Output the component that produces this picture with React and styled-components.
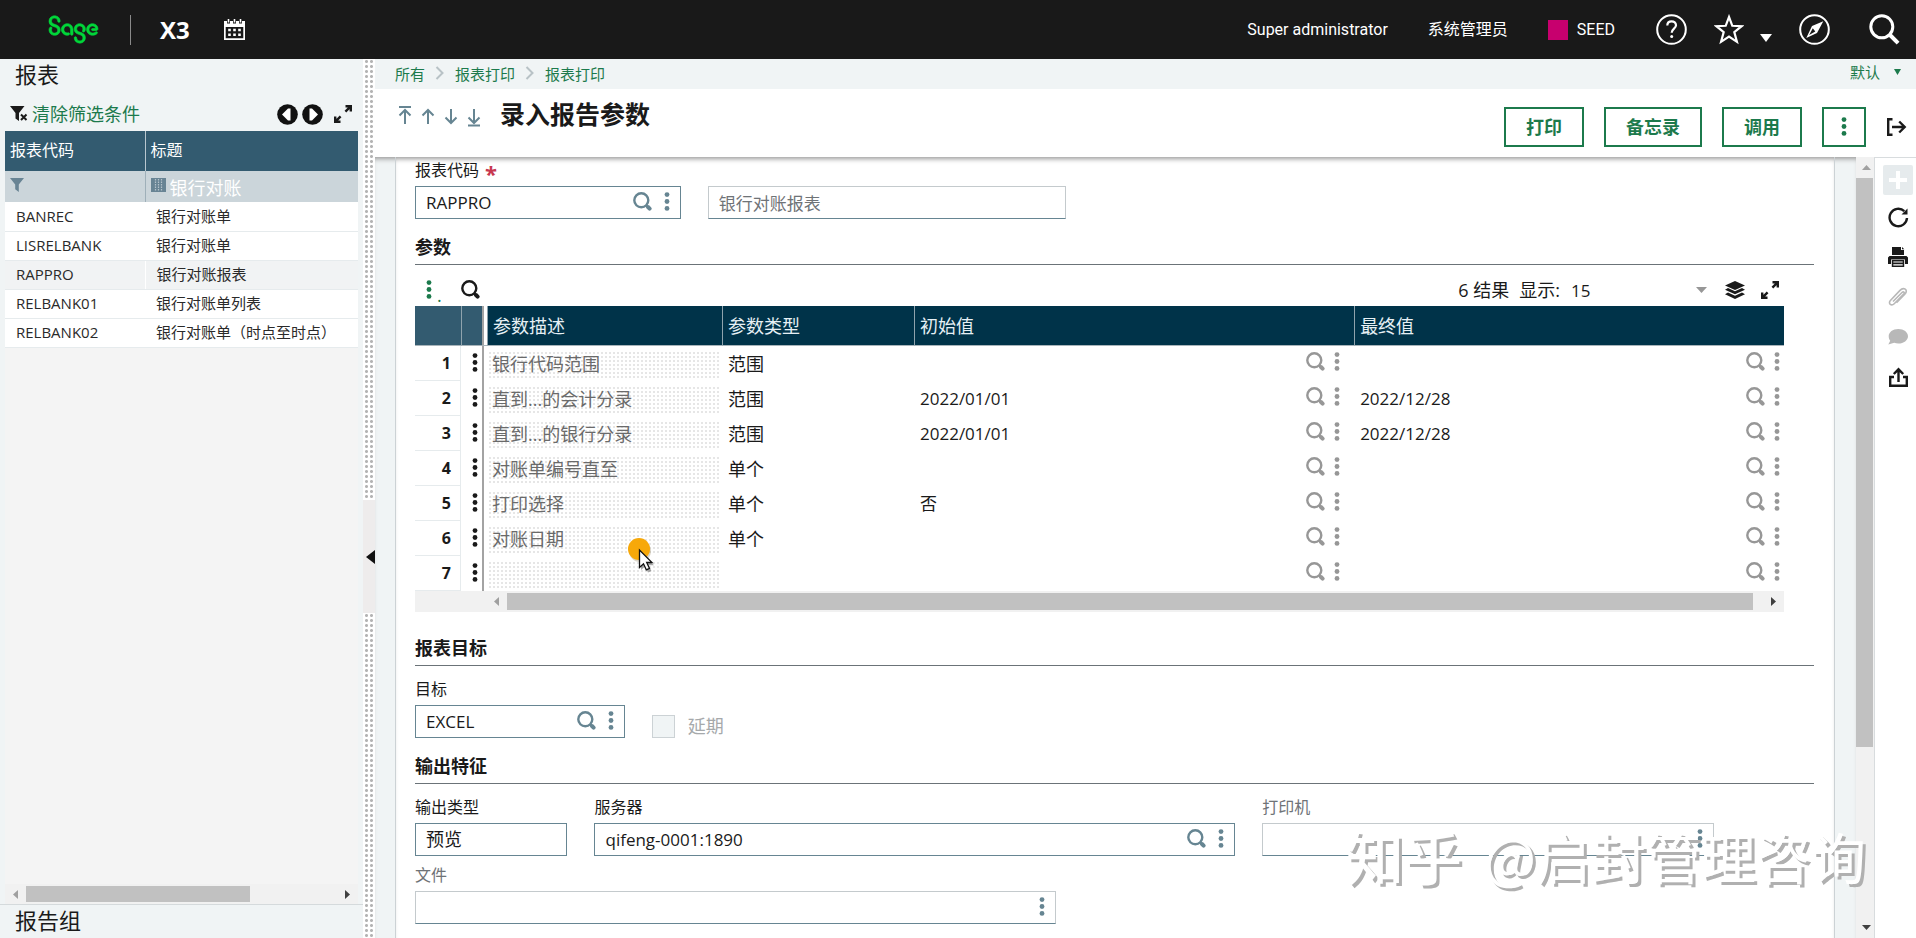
import React from "react";
import styled, { createGlobalStyle, css } from "styled-components";
import { SiSage } from "react-icons/si";

const Global = createGlobalStyle`
  *, *::before, *::after { box-sizing: border-box; }
  body {
    margin: 0;
    font-family: "Open Sans", "Noto Sans CJK SC", sans-serif;
    color: #1a1a1a;
    background: #fff;
  }
  button, input, select { font: inherit; color: inherit; }
  a { text-decoration: none; }
  svg { display: block; flex: none; }
`;

const Shell = styled.div`
  position: relative;
  display: flex;
  flex-direction: column;
  height: 100vh;
  overflow: hidden;
`;

const IconButton = styled.button`
  display: flex;
  align-items: center;
  justify-content: center;
  padding: 0;
  border: 0;
  background: none;
  color: ${(p) => p.$color || "inherit"};
  cursor: pointer;
`;

/* ---------- icons ---------- */

const Magnifier = ({ size = 19 }) => (
  <svg width={size} height={size} viewBox="0 0 19 19" fill="none" stroke="currentColor">
    <circle cx="8.3" cy="8.3" r="7" strokeWidth="2.4" />
    <path d="M13 13l1.5 1.5" strokeWidth="2.4" />
    <path d="M15 15l1.6 1.6" strokeWidth="4" strokeLinecap="round" />
  </svg>
);

const Dots = ({ size = 19 }) => (
  <svg width="6" height={size} viewBox="0 0 6 19" fill="currentColor">
    <circle cx="3" cy="2.6" r="2.4" />
    <circle cx="3" cy="9.5" r="2.4" />
    <circle cx="3" cy="16.4" r="2.4" />
  </svg>
);

const Triangle = ({ dir = "down", w = 10, h = 6 }) => {
  const points = {
    down: `0,0 ${w},0 ${w / 2},${h}`,
    up: `0,${h} ${w},${h} ${w / 2},0`,
    left: `${w},0 ${w},${h} 0,${h / 2}`,
    right: `0,0 0,${h} ${w},${h / 2}`,
  }[dir];
  return (
    <svg width={w} height={h} viewBox={`0 0 ${w} ${h}`} fill="currentColor">
      <polygon points={points} />
    </svg>
  );
};

const Expand = () => (
  <svg width="18" height="18" viewBox="0 0 18 18" fill="none" stroke="currentColor" strokeWidth="2.4">
    <path d="M11.5 1.2h5.3v5.3M16.4 1.6l-5 5" />
    <path d="M6.5 16.8H1.2v-5.3M1.6 16.4l5-5" />
  </svg>
);

const Calendar = () => (
  <svg width="21" height="21" viewBox="0 0 21 21" fill="currentColor">
    <path fillRule="evenodd" d="M0 2h3v2.500h3V2h3v2.500h3V2h3v2.500h3V2h3v19H0zM1.700 8v11.300h17.600V8z" />
    <path d="M3.700 0h1.600v3.500H3.700zM15.700 0h1.600v3.500h-1.600zM9.700 0h1.600v3.500H9.700z" />
    <path d="M4.200 9.800h2.600v2.500H4.200zM9.200 9.800h2.600v2.500H9.200zM14.200 9.800h2.600v2.500h-2.600zM4.200 14.600h2.600v2.500H4.200zM9.200 14.600h2.600v2.500H9.200zM14.200 14.600h2.600v2.500h-2.600z" />
  </svg>
);

const Help = () => (
  <svg width="31" height="31" viewBox="0 0 31 31" fill="none" stroke="currentColor">
    <circle cx="15.500" cy="15.500" r="14.300" strokeWidth="2" />
    <path d="M11.300 11.600c0-2.600 1.800-4.300 4.300-4.300s4.400 1.600 4.400 4c0 3.200-4.300 3.600-4.300 7.500" strokeWidth="2.200" />
    <circle cx="15.700" cy="22.600" r="1.500" fill="currentColor" stroke="none" />
  </svg>
);

const Star = () => (
  <svg width="30" height="31" viewBox="0 0 30 31" fill="none" stroke="currentColor" strokeWidth="2.200">
    <path d="M15 3l3.300 8.800 9.300.4-7.300 5.900 2.600 9.700L15 22.500l-7.900 5.300 2.600-9.700-7.300-5.900 9.300-.4z" />
  </svg>
);

const Compass = () => (
  <svg width="31" height="31" viewBox="0 0 31 31" fill="none" stroke="currentColor" strokeWidth="2">
    <circle cx="15.500" cy="15.500" r="14.300" />
    <path fill="currentColor" stroke="none" fillRule="evenodd" d="M24.300 7.300L18 19 7.300 24 13 12zM16.300 17.600l-2.500-3.300-3.600 6.800z" />
  </svg>
);

const BigSearch = () => (
  <svg width="31" height="31" viewBox="0 0 31 31" fill="none" stroke="currentColor">
    <circle cx="12.800" cy="12.800" r="11" strokeWidth="3" />
    <path d="M20.500 20.500l8.600 8.600" strokeWidth="4" />
  </svg>
);

const FilterClear = () => (
  <svg width="18" height="16" viewBox="0 0 18 16" fill="currentColor">
    <path d="M0 0h14.500L9 7v8L5.500 12.500V7z" />
    <path d="M11 8.500l5.500 5.500M16.500 8.500L11 14" stroke="currentColor" strokeWidth="2" />
  </svg>
);

const Funnel = () => (
  <svg width="14" height="14" viewBox="0 0 14 14" fill="currentColor">
    <path d="M0 0h14L8.800 6.500V14L5.200 11.200V6.500z" />
  </svg>
);

const Pattern = () => (
  <svg width="15" height="14" viewBox="0 0 15 14">
    <rect width="15" height="14" fill="#688494" />
    <path d="M4.500 1v12M7.500 1v12M10.500 1v12" stroke="#b4c2ca" strokeWidth="1.200" strokeDasharray="1.500 1" />
  </svg>
);

const CircleArrow = ({ flip }) => (
  <svg width="21" height="21" viewBox="0 0 21 21">
    <circle cx="10.500" cy="10.500" r="10.300" fill="#111" />
    <path d={flip ? "M10 4.500L16 10.500L10 16.500L7.500 16.500V4.500z" : "M11 4.500L5 10.500L11 16.500L13.500 16.500V4.500z"} fill="#fff" />
  </svg>
);

const NavArrow = ({ down, bar }) => (
  <svg width="14" height="22" viewBox="0 0 14 22" fill="none" stroke="currentColor" strokeWidth="2">
    {down ? <path d="M7 4v14M1.500 12.500L7 18l5.500-5.500" /> : <path d="M7 19V5M1.500 10.500L7 5l5.500 5.500" />}
    {bar && <path d={down ? "M1 20.500h12" : "M1 2h12"} />}
  </svg>
);

const Chevron = () => (
  <svg width="10" height="14" viewBox="0 0 10 14" fill="none" stroke="#b8c2c6" strokeWidth="2">
    <path d="M1.500 1l6 6-6 6" />
  </svg>
);

const Exit = () => (
  <svg width="21" height="20" viewBox="0 0 21 20" fill="none" stroke="currentColor" strokeWidth="2.400">
    <path d="M6.500 2.200H2.200v15.600h4.300M6 10h13M13.200 4.500L18.700 10l-5.500 5.500" />
  </svg>
);

const Layers = () => (
  <svg width="20" height="18" viewBox="0 0 20 18" fill="currentColor">
    <path d="M10 0l10 4.500L10 9 0 4.500z" />
    <path d="M3 7L0 8.700l10 4.500 10-4.500L17 7l-7 3.300z" />
    <path d="M3 11.500l-3 1.700L10 18l10-4.800-3-1.700-7 3.300z" />
  </svg>
);

const Refresh = () => (
  <svg width="21" height="21" viewBox="0 0 21 21" fill="none" stroke="currentColor" strokeWidth="2.400">
    <path d="M19 11A8.700 8.700 0 1 1 16.300 4.200" />
    <path d="M19.500 1.500v6h-6z" fill="currentColor" stroke="none" />
  </svg>
);

const Printer = () => (
  <svg width="20" height="20" viewBox="0 0 20 20" fill="currentColor">
    <path d="M4 0h9v3h3v5H4z" />
    <path d="M14 0l2.300 2.300H14z" />
    <path d="M1.500 9h17L20 10.500V17h-3v-4.500H3V17H0v-6.500z" />
    <path fillRule="evenodd" d="M3.800 13h12.400v7H3.800zM5.300 14.500v1h9.400v-1zM5.300 17.200v1.200h9.400v-1.200z" />
  </svg>
);

const Clip = () => (
  <svg width="20" height="20" viewBox="0 0 20 20" fill="none" stroke="currentColor" strokeWidth="1.600">
    <path d="M5 14.500l9-9c1.500-1.500 3 0 1.700 1.500l-9.500 9.700c-2.700 2.700-6.500 0-3.800-3.200L12 3.400c3.500-3.800 8.700-.6 5 3.600L8.500 15.700" />
  </svg>
);

const Chat = () => (
  <svg width="20" height="16" viewBox="0 0 20 16" fill="currentColor">
    <path d="M10.300 0C15.800 0 20 3.200 20 7.200s-4.200 7.300-9.700 7.300c-1.500 0-2.900-.2-4.100-.7L.3 15.500l1.900-3.700C1.200 10.500.7 8.900.7 7.200.7 3.200 4.800 0 10.300 0z" />
  </svg>
);

const Share = () => (
  <svg width="19" height="21" viewBox="0 0 19 21" fill="none" stroke="currentColor" strokeWidth="2.400">
    <path d="M5 10H1.200v8.800h16.600V10H14M9.500 15V3M4.800 7l4.700-4.700L14.200 7" />
  </svg>
);

const Plus = () => (
  <svg width="18" height="18" viewBox="0 0 18 18" stroke="#fff" strokeWidth="4">
    <path d="M9 0v18M0 9h18" />
  </svg>
);

/* ---------- top bar ---------- */

const TopBar = styled.header`
  display: flex;
  align-items: center;
  justify-content: space-between;
  flex: none;
  height: 59px;
  padding: 0 16px 0 49px;
  background: #191919;
  color: #fff;
`;

const TopGroup = styled.div`
  display: flex;
  align-items: center;
`;

const Brand = styled.a`
  display: flex;
  padding-right: 32px;
  color: #00d639;

  svg { overflow: visible; stroke-width: 0.3; }
`;

const Product = styled.span`
  display: flex;
  align-items: center;
  height: 30px;
  padding: 0 34px 0 29px;
  border-left: 1px solid #8a8a8a;
  font-size: 24px;
  font-weight: 700;
`;

const UserText = styled.a`
  margin-right: 40px;
  color: #fff;
  font-family: Roboto, "Noto Sans CJK SC", sans-serif;
  font-size: 16px;
  line-height: 24px;
`;

const Endpoint = styled.a`
  display: flex;
  align-items: center;
  gap: 9px;
  margin-right: 41px;
  color: #fff;
  font-family: Roboto, sans-serif;
  font-size: 16px;

  &::before {
    content: "";
    width: 20px;
    height: 20px;
    background: #c7006e;
  }
`;

const TopIcons = styled.div`
  display: flex;
  align-items: center;

  ${IconButton} + ${IconButton} { margin-left: 27px; }
  ${IconButton}:last-child { margin-left: 39px; }
`;

const FavCaret = styled.span`
  padding: 16px 0 0 16px;
`;

/* ---------- left list ---------- */

const Body = styled.div`
  display: flex;
  flex: 1;
  min-height: 0;
`;

const Sidebar = styled.aside`
  display: flex;
  flex-direction: column;
  width: 363px;
  flex: none;
  background: #f0f4f5;
`;

const SideTitle = styled.h2`
  margin: 0;
  padding-left: 15px;
  font-size: 22px;
  line-height: 30px;
  font-weight: 400;
  ${(p) => p.$bottom && css`
    padding-bottom: 3px;
    border-top: 1px solid #d5dadc;
  `}
`;

const SideTools = styled.div`
  display: flex;
  align-items: center;
  height: 42px;
  padding: 8px 11px 0 10px;
`;

const ClearFilter = styled.button`
  display: flex;
  align-items: center;
  gap: 4px;
  margin-right: auto;
  padding: 0;
  border: 0;
  background: none;
  font-size: 18px;
  line-height: 24px;
  cursor: pointer;

  span { color: #1c7a4c; }
`;

const Pager = styled.div`
  display: flex;
  align-items: center;
  gap: 4px;
  margin-right: 11px;
`;

const ListPane = styled.div`
  display: flex;
  flex: 1;
  flex-direction: column;
  min-height: 0;
  margin: 0 5px;
  background: #f4f4f4;
`;

const ListTable = styled.table`
  width: 100%;
  border-collapse: collapse;
  table-layout: fixed;
  background: #fff;
  font-size: 15px;
  line-height: 20px;
  color: #2a2a2a;

  th {
    height: 40px;
    padding: 0 5px 2px;
    background: #335b70;
    color: #fff;
    font-size: 16px;
    font-weight: 400;
    text-align: left;
  }
  th + th { border-left: 1px solid #b9c7cf; }
`;

const ListRow = styled.tr`
  background: ${(p) => (p.$current ? "#f1f3f4" : "#fff")};

  td {
    height: 29px;
    padding: 0 0 1px 11px;
    border-bottom: 1px solid #e6ebed;
    white-space: nowrap;
  }
  td + td { border-left: ${(p) => (p.$current ? "1px solid #fff" : 0)}; }
`;

const FilterRow = styled.tr`
  background: #cbd5da;

  td { height: 31px; padding: 0 5px; color: #688494; }
  td + td { border-left: 1px solid #9fb0b9; }
`;

const FilterBox = styled.label`
  display: flex;
  align-items: center;
  gap: 4px;

  svg { margin-bottom: 4px; }
  input {
    width: 100%;
    min-width: 0;
    height: 30px;
    padding: 0;
    border: 0;
    background: none;
    color: #fff;
    font-size: 18px;
  }
`;

/* ---------- scroll bars ---------- */

const HTrack = styled.div`
  display: flex;
  align-items: center;
  height: ${(p) => p.$height}px;
  padding-left: ${(p) => p.$inset || 0}px;
  background: #f1f1f1;
`;

const Cap = styled.span`
  display: flex;
  flex: none;
  align-items: center;
  justify-content: center;
  width: 21px;
  height: 21px;
  color: ${(p) => (p.$off ? "#a0a0a0" : "#404040")};
`;

const Thumb = styled.span`
  flex: ${(p) => p.$size};
  align-self: stretch;
  margin: ${(p) => (p.$vertical ? "0 1px 0 0" : "2px 0")};
  background: #c1c1c1;
`;

const Rest = styled.span`
  flex: ${(p) => p.$size};
`;

const VTrack = styled.div`
  display: flex;
  flex-direction: column;
  flex: none;
  width: 18px;
  background: #f1f1f1;
`;

/* ---------- splitter ---------- */

const Splitter = styled.div`
  display: flex;
  flex-direction: column;
  width: 12px;
  flex: none;
  background: #fff;
`;

const Grip = styled.div`
  flex: ${(p) => p.$size};
  margin: 0 1px;
  background: radial-gradient(circle, #b4b4b4 1px, #fff 2px) 0 0 / 5px 5px;
`;

const Collapse = styled(IconButton)`
  height: 113px;
  justify-content: flex-end;
  background: #eeecec;
  color: #111;
`;

/* ---------- main ---------- */

const Main = styled.main`
  display: flex;
  flex: 1;
  flex-direction: column;
  min-width: 0;
`;

const Crumbs = styled.nav`
  display: flex;
  align-items: center;
  flex: none;
  height: 30px;
  gap: 10px;
  padding: 0 15px 2px 20px;
  background: #f0f4f5;
  font-size: 15px;

  a { color: #1c7a4c; }
`;

const ViewMenu = styled.button`
  display: flex;
  align-items: center;
  gap: 14px;
  margin-left: auto;
  padding: 0 0 2px;
  border: 0;
  background: none;
  color: #1c7a4c;
  line-height: 24px;
`;

const TitleBar = styled.div`
  display: flex;
  align-items: flex-start;
  flex: none;
  height: 68px;
  padding: 0 9px 0 23px;
  background: #fff;
`;

const RecordNav = styled.div`
  display: flex;
  gap: 9px;
  padding-top: 16px;
  color: #668592;
`;

const PageTitle = styled.h1`
  margin: 7px auto 0 19px;
  font-size: 25px;
  line-height: 36px;
  font-weight: 700;
`;

const Actions = styled.div`
  display: flex;
  align-items: center;
  gap: 20px;
  padding-top: 18px;
`;

const ActionButton = styled.button`
  display: flex;
  align-items: center;
  height: 40px;
  padding: 0 ${(p) => (p.$narrow ? 17 : 20)}px 2px;
  border: 2px solid #1c7a4c;
  background: #fff;
  color: #1c7a4c;
  font-size: 18px;
  font-weight: 700;
  cursor: pointer;
`;

const Work = styled.div`
  display: flex;
  flex: 1;
  min-height: 0;
`;

const Canvas = styled.div`
  flex: 1;
  min-width: 0;
  overflow: hidden;
  padding: 0 21px 0 20px;
  background: #f0f4f5;
  box-shadow: inset 0 5px 5px -3px #999;
`;

const Card = styled.div`
  height: 100%;
  padding: 1px 20px 0 19px;
  border: 1px solid #ccd2d5;
  border-width: 0 1px;
  background: #fff;
  box-shadow: inset 0 5px 5px -3px #999;
`;

const SectionTitle = styled.h3`
  margin: ${(p) => (p.$wide ? 24 : 16)}px 0 0;
  padding-bottom: 5px;
  border-bottom: 1px solid #6b7378;
  font-size: 18px;
  line-height: 24px;
  font-weight: 700;
`;

const FieldRow = styled.div`
  display: flex;
  align-items: flex-end;
  gap: 27px;
  margin-top: ${(p) => p.$top || 0}px;
`;

const Field = styled.div`
  width: ${(p) => p.$width}%;

  > label {
    display: flex;
    gap: 6px;
    height: 28px;
    font-size: 16px;
    line-height: 24px;
    color: ${(p) => (p.$off ? "#6f7377" : "#1a1a1a")};
  }
  sup {
    color: #c7384f;
    font-size: 22px;
    font-weight: 700;
    line-height: 30px;
    vertical-align: baseline;
  }
`;

const Box = styled.div`
  display: flex;
  align-items: center;
  gap: 12px;
  height: 33px;
  padding: 0 10px 3px 0;
  border: 1px solid ${(p) => (p.$off ? "#c4cacd" : "#668592")};
  border-bottom-color: #668592;
  color: #668592;

  input, select {
    flex: 1;
    width: 100%;
    min-width: 0;
    height: 30px;
    padding: 2px 0 0 10px;
    border: 0;
    outline: 0;
    appearance: none;
    background: none;
    color: ${(p) => (p.$off ? "#6f7377" : "#1a1a1a")};
    font-size: 17px;
  }
  select { font-size: 18px; }
`;

const Check = styled.label`
  display: flex;
  align-items: center;
  gap: 13px;
  color: #a6a9ab;
  font-size: 18px;
  line-height: 24px;

  input {
    width: 23px;
    height: 23px;
    margin: 0;
    appearance: none;
    border: 1px solid #ccd2d5;
    background: #f0f4f5;
  }
`;

/* ---------- parameter grid ---------- */

const Grid = styled.div`
  margin-right: 30px;
`;

const GridTools = styled.div`
  display: flex;
  align-items: center;
  height: 41px;
  padding: 8px 5px 0 11px;
  font-size: 18px;
`;

const GridMenu = styled.span`
  display: flex;
  align-items: flex-end;
  gap: 5px;
  margin-right: 19px;
  color: #1c7a4c;
  line-height: 8px;
`;

const Count = styled.span`
  margin-left: auto;
  margin-right: 10px;
  line-height: 24px;
`;

const PageSize = styled.label`
  display: flex;
  align-items: center;
  line-height: 24px;
  color: #1a1a1a;

  select {
    width: 125px;
    margin-left: 11px;
    padding: 2px 0 0 0;
    border: 0;
    appearance: none;
    background: none;
    font-size: 17px;
  }
  svg { margin-right: 18px; color: #979797; }
`;

const ExpandGap = styled.span`
  padding-left: 16px;
`;

const ParamTable = styled.table`
  width: 100%;
  border-spacing: 0;
  table-layout: fixed;
  font-size: 17px;
  line-height: 24px;

  th { font-weight: 400; }
  thead th {
    height: 40px;
    padding: 0 0 0 5px;
    border-left: 1px solid #8fa3ad;
    border-bottom: 1px solid #a8b4ba;
    background: #003349;
    color: #e6f0f5;
    font-size: 18px;
    text-align: left;
  }
  thead th:first-child { border-left: 0; background: #335b70; }
  thead th:nth-child(2) {
    background: linear-gradient(to left, #fff 3px, #a3a3a3 3px, #a3a3a3 5px, #335b70 5px);
  }
`;

const ParamRow = styled.tr`
  td, th { height: 35px; padding: 0; }

  th {
    padding-right: 9px;
    border-right: 1px solid #e6ebed;
    border-bottom: 1px solid #e6ebed;
    font-size: 16px;
    font-weight: 700;
    text-align: right;
  }
`;

const MenuCell = styled.td`
  background: linear-gradient(to left, #fff 3px, #a3a3a3 3px, #a3a3a3 5px, #fff 5px);

  button { width: 28px; height: 19px; margin-bottom: 2px; }
`;

const NameCell = styled.td`
  position: relative;
  color: #6a6a6a;
  font-size: 18px;

  div {
    height: 27px;
    margin: 2px 2px 0 1px;
    padding-left: 4px;
    line-height: 27px;
    background: radial-gradient(circle, #e6e6e6 1px, transparent 1px) 0 0 / 4px 4px;
  }
`;

const TypeCell = styled.td`
  && { padding-left: 6px; font-size: 18px; }
`;

const ValueCell = styled.td`
  && { padding: 0 ${(p) => (p.$last ? 4 : 14)}px 0 6px; }
`;

const ValueLine = styled.div`
  display: flex;
  align-items: center;
  gap: 9px;

  span { flex: 1; }
  button { margin-bottom: 4px; }
`;

const Pointer = styled.span`
  position: absolute;
  z-index: 2;
  left: 140px;
  top: 16px;
`;

const PointerMark = () => (
  <Pointer aria-hidden="true">
    <svg width="30" height="38" viewBox="0 0 30 38">
      <ellipse cx="13" cy="14" rx="11" ry="11" fill="#9a8a60" opacity=".35" />
      <circle cx="12" cy="12" r="11" fill="#f7a809" />
      <path d="M14 15v18l4-3.500 3 6 3.500-1.500-3-5.800h5.500z" fill="#555" opacity=".5" />
      <path d="M12.500 13v17.500l4-3.700 2.800 6 3.200-1.400-2.800-5.900h5.300z" fill="#fff" stroke="#111" strokeWidth="1.300" />
    </svg>
  </Pointer>
);

/* ---------- right tool strip ---------- */

const ToolStrip = styled.div`
  display: flex;
  flex-direction: column;
  align-items: flex-end;
  flex: none;
  width: 42px;
  padding: 7px 3px 0 0;
  border: 1px solid #d8dcde;
  border-width: 1px 0 0 1px;
  background: #fff;

  ${IconButton} { width: 30px; height: 40px; }
  ${IconButton}:first-child {
    height: 30px;
    margin-bottom: 2px;
    border-radius: 2px;
    background: #e6ebed;
  }
`;

const Watermark = styled.div`
  position: absolute;
  z-index: 3;
  right: 50px;
  bottom: 43px;
  display: flex;
  align-items: center;
  gap: 22px;
  color: #fff;
  font-family: "Noto Sans CJK SC", sans-serif;
  font-size: 55px;
  line-height: 80px;
  text-shadow: 3px 3px 0 #b0b0b0;
  white-space: nowrap;
  pointer-events: none;

  b { font-size: 58px; font-weight: 500; }
`;

const reports = [
  ["BANREC", "银行对账单"],
  ["LISRELBANK", "银行对账单"],
  ["RAPPRO", "银行对账报表"],
  ["RELBANK01", "银行对账单列表"],
  ["RELBANK02", "银行对账单（时点至时点）"],
];

const params = [
  ["银行代码范围", "范围", "", ""],
  ["直到...的会计分录", "范围", "2022/01/01", "2022/12/28"],
  ["直到...的银行分录", "范围", "2022/01/01", "2022/12/28"],
  ["对账单编号直至", "单个", "", ""],
  ["打印选择", "单个", "否", ""],
  ["对账日期", "单个", "", ""],
  ["", "", "", ""],
];

const LookupTools = ({ color }) => (
  <>
    <IconButton type="button" aria-label="选择" $color={color}><Magnifier /></IconButton>
    <IconButton type="button" aria-label="操作" $color={color}><Dots /></IconButton>
  </>
);

const Value = ({ children, last }) => (
  <ValueCell $last={last}>
    <ValueLine>
      <span>{children}</span>
      <LookupTools color="#979797" />
    </ValueLine>
  </ValueCell>
);

function ReportList() {
  return (
    <Sidebar>
      <SideTitle>报表</SideTitle>
      <SideTools>
        <ClearFilter type="button"><FilterClear /><span>清除筛选条件</span></ClearFilter>
        <Pager>
          <IconButton type="button" aria-label="上一页"><CircleArrow /></IconButton>
          <IconButton type="button" aria-label="下一页"><CircleArrow flip /></IconButton>
        </Pager>
        <IconButton type="button" aria-label="展开"><Expand /></IconButton>
      </SideTools>
      <ListPane>
        <ListTable>
          <colgroup><col width="140" /><col /></colgroup>
          <thead>
            <tr><th>报表代码</th><th>标题</th></tr>
          </thead>
          <tbody>
            <FilterRow>
              <td><FilterBox><Funnel /><input aria-label="报表代码筛选" /></FilterBox></td>
              <td><FilterBox><Pattern /><input aria-label="标题筛选" defaultValue="银行对账" /></FilterBox></td>
            </FilterRow>
            {reports.map(([code, title]) => (
              <ListRow key={code} $current={code === "RAPPRO"}>
                <td>{code}</td>
                <td>{title}</td>
              </ListRow>
            ))}
          </tbody>
        </ListTable>
        <Rest $size={1} />
        <HTrack $height={20}>
          <Cap $off><Triangle dir="left" w={5} h={9} /></Cap>
          <Thumb $size={224} />
          <Rest $size={87} />
          <Cap><Triangle dir="right" w={5} h={9} /></Cap>
        </HTrack>
      </ListPane>
      <SideTitle $bottom>报告组</SideTitle>
    </Sidebar>
  );
}

function ParameterGrid() {
  return (
    <Grid>
      <GridTools>
        <GridMenu>
          <IconButton type="button" aria-label="网格操作"><Dots /></IconButton>.
        </GridMenu>
        <IconButton type="button" aria-label="搜索"><Magnifier /></IconButton>
        <Count>6 结果</Count>
        <PageSize>
          显示:
          <select defaultValue="15"><option>15</option></select>
          <Triangle w={11} h={6} />
        </PageSize>
        <IconButton type="button" aria-label="图层"><Layers /></IconButton>
        <IconButton type="button" aria-label="展开">
          <ExpandGap><Expand /></ExpandGap>
        </IconButton>
      </GridTools>
      <ParamTable>
        <colgroup>
          <col width="46" /><col width="26" /><col width="235" /><col width="192" /><col width="32.15%" /><col />
        </colgroup>
        <thead>
          <tr><th /><th /><th>参数描述</th><th>参数类型</th><th>初始值</th><th>最终值</th></tr>
        </thead>
        <tbody>
          {params.map(([name, type, from, to], i) => (
            <ParamRow key={i}>
              <th scope="row">{i + 1}</th>
              <MenuCell><IconButton type="button" aria-label="行操作"><Dots /></IconButton></MenuCell>
              <NameCell><div>{name}</div>{name === "对账日期" && <PointerMark />}</NameCell>
              <TypeCell>{type}</TypeCell>
              <Value>{from}</Value>
              <Value last>{to}</Value>
            </ParamRow>
          ))}
        </tbody>
      </ParamTable>
      <HTrack $height={21} $inset={71}>
        <Cap $off><Triangle dir="left" w={5} h={9} /></Cap>
        <Thumb $size={1246} />
        <Rest $size={10} />
        <Cap><Triangle dir="right" w={5} h={9} /></Cap>
      </HTrack>
    </Grid>
  );
}

export default function App() {
  return (
    <Shell>
      <Global />
      <TopBar>
        <TopGroup>
          <Brand href="#" aria-label="Sage"><SiSage size={49} /></Brand>
          <Product>X3</Product>
          <IconButton type="button" aria-label="日历"><Calendar /></IconButton>
        </TopGroup>
        <TopGroup>
          <UserText href="#">Super administrator</UserText>
          <UserText href="#">系统管理员</UserText>
          <Endpoint href="#">SEED</Endpoint>
          <TopIcons>
            <IconButton type="button" aria-label="帮助"><Help /></IconButton>
            <IconButton type="button" aria-label="收藏"><Star /><FavCaret><Triangle w={12} h={8} /></FavCaret></IconButton>
            <IconButton type="button" aria-label="导航"><Compass /></IconButton>
            <IconButton type="button" aria-label="搜索"><BigSearch /></IconButton>
          </TopIcons>
        </TopGroup>
      </TopBar>
      <Body>
        <ReportList />
        <Splitter>
          <Grip $size={441} />
          <Collapse type="button" aria-label="收起"><Triangle dir="left" w={9} h={14} /></Collapse>
          <Grip $size={325} />
        </Splitter>
        <Main>
          <Crumbs>
            <a href="#">所有</a><Chevron />
            <a href="#">报表打印</a><Chevron />
            <a href="#">报表打印</a>
            <ViewMenu type="button">默认<Triangle w={7} h={6} /></ViewMenu>
          </Crumbs>
          <TitleBar>
            <RecordNav>
              <IconButton type="button" aria-label="第一条"><NavArrow bar /></IconButton>
              <IconButton type="button" aria-label="上一条"><NavArrow /></IconButton>
              <IconButton type="button" aria-label="下一条"><NavArrow down /></IconButton>
              <IconButton type="button" aria-label="最后一条"><NavArrow down bar /></IconButton>
            </RecordNav>
            <PageTitle>录入报告参数</PageTitle>
            <Actions>
              <ActionButton type="button">打印</ActionButton>
              <ActionButton type="button">备忘录</ActionButton>
              <ActionButton type="button">调用</ActionButton>
              <ActionButton type="button" $narrow aria-label="更多"><Dots /></ActionButton>
              <IconButton type="button" aria-label="退出"><Exit /></IconButton>
            </Actions>
          </TitleBar>
          <Work>
            <Canvas>
              <Card>
                <FieldRow>
                  <Field $width={19}>
                    <label htmlFor="code">报表代码<sup>*</sup></label>
                    <Box><input id="code" defaultValue="RAPPRO" /><LookupTools /></Box>
                  </Field>
                  <Field $width={25.6}>
                    <Box $off><input aria-label="报表名称" readOnly defaultValue="银行对账报表" /></Box>
                  </Field>
                </FieldRow>

                <SectionTitle>参数</SectionTitle>
                <ParameterGrid />

                <SectionTitle $wide>报表目标</SectionTitle>
                <FieldRow $top={11}>
                  <Field $width={15}>
                    <label htmlFor="target">目标</label>
                    <Box><input id="target" defaultValue="EXCEL" /><LookupTools /></Box>
                  </Field>
                  <Check><input type="checkbox" disabled />延期</Check>
                </FieldRow>

                <SectionTitle>输出特征</SectionTitle>
                <FieldRow $top={11}>
                  <Field $width={10.9}>
                    <label htmlFor="kind">输出类型</label>
                    <Box><select id="kind"><option>预览</option></select></Box>
                  </Field>
                  <Field $width={45.8}>
                    <label htmlFor="server">服务器</label>
                    <Box><input id="server" defaultValue="qifeng-0001:1890" /><LookupTools /></Box>
                  </Field>
                  <Field $width={32.3} $off>
                    <label htmlFor="printer">打印机</label>
                    <Box $off><input id="printer" /><IconButton type="button" aria-label="操作"><Dots /></IconButton></Box>
                  </Field>
                </FieldRow>
                <FieldRow $top={7}>
                  <Field $width={45.8} $off>
                    <label htmlFor="file">文件</label>
                    <Box $off><input id="file" /><IconButton type="button" aria-label="操作"><Dots /></IconButton></Box>
                  </Field>
                </FieldRow>
              </Card>
            </Canvas>
            <VTrack>
              <Cap $off><Triangle dir="up" w={9} h={5} /></Cap>
              <Thumb $size={569} $vertical />
              <Rest $size={170} />
              <Cap><Triangle w={9} h={5} /></Cap>
            </VTrack>
            <ToolStrip>
              <IconButton type="button" aria-label="新建"><Plus /></IconButton>
              <IconButton type="button" aria-label="刷新"><Refresh /></IconButton>
              <IconButton type="button" aria-label="打印"><Printer /></IconButton>
              <IconButton type="button" aria-label="附件" $color="#b8b8b8"><Clip /></IconButton>
              <IconButton type="button" aria-label="备注" $color="#b8b8b8"><Chat /></IconButton>
              <IconButton type="button" aria-label="分享"><Share /></IconButton>
            </ToolStrip>
          </Work>
        </Main>
      </Body>
      <Watermark><b>知乎</b><span>@启封管理咨询</span></Watermark>
    </Shell>
  );
}
